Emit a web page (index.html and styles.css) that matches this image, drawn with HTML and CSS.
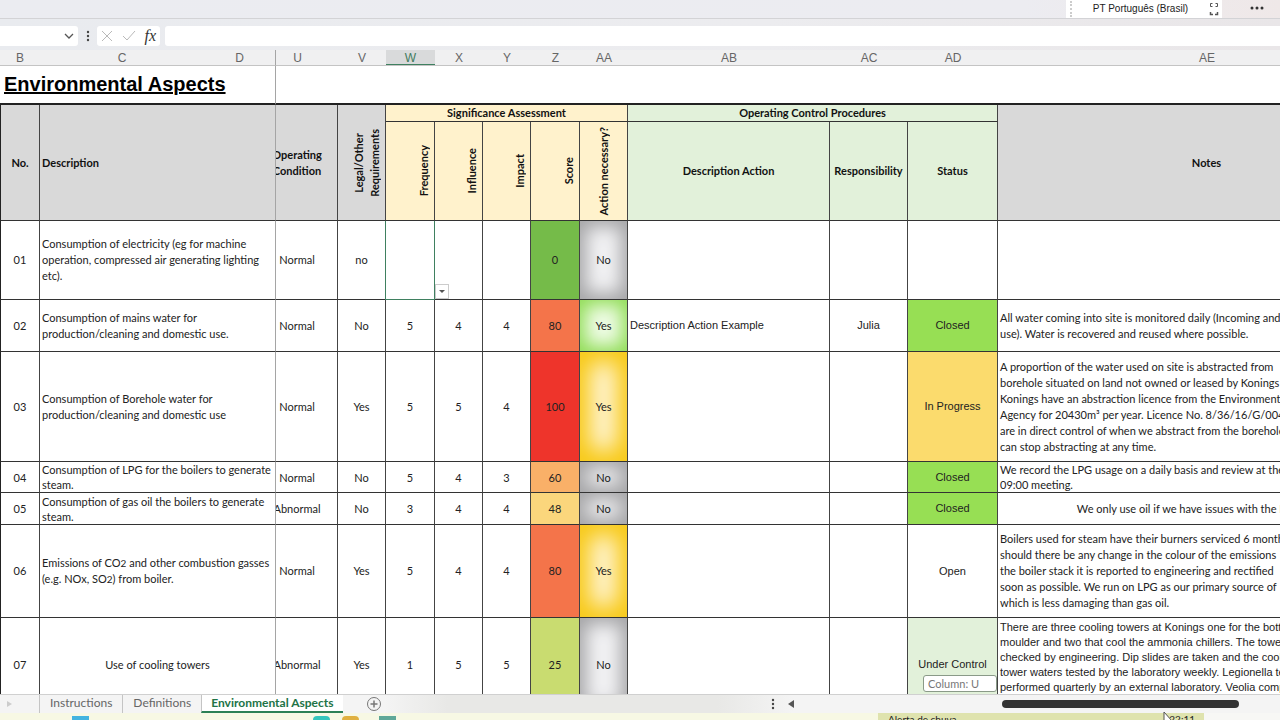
FILE: index.html
```
<!DOCTYPE html>
<html lang="en">
<head>
    <meta charset="UTF-8">
    <meta name="viewport" content="width=device-width, initial-scale=1.0">
    <title>Environmental Aspects</title>
    <link rel="stylesheet" href="styles.css">
</head>
<body>
    <header class="ribbon">
        <div class="language-bar">
            <span class="grip"></span>
            <span class="language">PT Português (Brasil)</span>
            <svg class="bar-icon" viewBox="0 0 10 18" width="10" height="18" fill="none" stroke="#555">
                <path d="M3.500 3.500H1.500V6.500H3.500M6.500 3.500H8.500V6.500H6.500"/>
                <path d="M1.500 12V14.500H4M8.500 12V14.500H6" stroke-width="1.500"/>
            </svg>
        </div>
        <button class="more" aria-label="More options">
            <svg viewBox="0 0 14 4" width="14" height="4" fill="#333"><circle cx="2" cy="2" r="1.500"/><circle cx="7" cy="2" r="1.500"/><circle cx="12" cy="2" r="1.500"/></svg>
        </button>
    </header>

    <div class="formula-bar">
        <div class="name-box">
            <input type="text" aria-label="Name box">
            <button aria-label="Open name list">
                <svg viewBox="0 0 10 6" width="10" height="6" fill="none" stroke="#555" stroke-width="1.300"><path d="M1 1l4 4 4-4"/></svg>
            </button>
        </div>
        <svg class="dots" viewBox="0 0 4 12" width="4" height="12" fill="#444"><circle cx="2" cy="2" r="1.200"/><circle cx="2" cy="6" r="1.200"/><circle cx="2" cy="10" r="1.200"/></svg>
        <div class="actions">
            <button aria-label="Cancel">
                <svg viewBox="0 0 12 12" width="12" height="12" fill="none" stroke="#b9b9b9"><path d="M1 1l10 10M11 1L1 11"/></svg>
            </button>
            <button aria-label="Enter">
                <svg viewBox="0 0 14 12" width="14" height="12" fill="none" stroke="#b9b9b9"><path d="M1 6l4 4L13 1"/></svg>
            </button>
            <button class="fx" aria-label="Insert function">fx</button>
        </div>
        <input class="formula" type="text" aria-label="Formula">
    </div>

    <main class="grid">
        <table>
            <colgroup>
                <col class="c-b"><col class="c-c"><col class="c-d"><col class="c-u"><col class="c-v">
                <col class="c-w"><col class="c-x"><col class="c-y"><col class="c-z"><col class="c-aa">
                <col class="c-ab"><col class="c-ac"><col class="c-ad"><col class="c-ae">
            </colgroup>
            <thead>
                <tr class="letters">
                    <th>B</th><th>C</th><th class="freeze">D</th><th class="under"><span>U</span></th><th>V</th>
                    <th class="selected">W</th><th>X</th><th>Y</th><th>Z</th><th>AA</th>
                    <th>AB</th><th>AC</th><th>AD</th><th>AE</th>
                </tr>
                <tr class="title-row">
                    <td colspan="3" class="freeze"><h1>Environmental Aspects</h1></td>
                    <td colspan="11"></td>
                </tr>
                <tr class="group-row">
                    <th rowspan="2" class="gray edge">No.</th>
                    <th rowspan="2" colspan="2" class="gray left freeze">Description</th>
                    <th rowspan="2" class="gray under"><span>Operating<br>Condition</span></th>
                    <th rowspan="2" class="gray upright"><span>Legal/Other<br>Requirements</span></th>
                    <th colspan="5" class="cream">Significance Assessment</th>
                    <th colspan="3" class="mint">Operating Control Procedures</th>
                    <th rowspan="2" class="gray">Notes</th>
                </tr>
                <tr class="head-row">
                    <th class="cream upright"><span>Frequency</span></th>
                    <th class="cream upright"><span>Influence</span></th>
                    <th class="cream upright"><span>Impact</span></th>
                    <th class="cream upright"><span>Score</span></th>
                    <th class="cream upright center"><span>Action necessary?</span></th>
                    <th class="mint">Description Action</th>
                    <th class="mint">Responsibility</th>
                    <th class="mint">Status</th>
                </tr>
            </thead>
            <tbody>
                <tr class="row-01">
                    <td class="edge">01</td>
                    <td colspan="2" class="left freeze">Consumption of electricity (eg for machine<br>operation, compressed air generating lighting<br>etc).</td>
                    <td class="under"><span>Normal</span></td>
                    <td>no</td>
                    <td class="active-cell"><button class="cell-drop" aria-label="Pick a value"></button></td>
                    <td></td>
                    <td></td>
                    <td class="score-0">0</td>
                    <td class="glow-gray">No</td>
                    <td></td>
                    <td></td>
                    <td></td>
                    <td></td>
                </tr>
                <tr class="row-02">
                    <td class="edge">02</td>
                    <td colspan="2" class="left freeze">Consumption of mains water for<br>production/cleaning and domestic use.</td>
                    <td class="under"><span>Normal</span></td>
                    <td>No</td>
                    <td>5</td>
                    <td>4</td>
                    <td>4</td>
                    <td class="score-80">80</td>
                    <td class="glow-green">Yes</td>
                    <td class="arial left">Description Action Example</td>
                    <td class="arial">Julia</td>
                    <td class="arial closed">Closed</td>
                    <td class="left">All water coming into site is monitored daily (Incoming and<br>use). Water is recovered and reused where possible.</td>
                </tr>
                <tr class="row-03">
                    <td class="edge">03</td>
                    <td colspan="2" class="left freeze">Consumption of Borehole water for<br>production/cleaning and domestic use</td>
                    <td class="under"><span>Normal</span></td>
                    <td>Yes</td>
                    <td>5</td>
                    <td>5</td>
                    <td>4</td>
                    <td class="score-100">100</td>
                    <td class="glow-gold">Yes</td>
                    <td></td>
                    <td></td>
                    <td class="arial progress">In Progress</td>
                    <td class="left">A proportion of the water used on site is abstracted from<br>borehole situated on land not owned or leased by Konings<br>Konings have an abstraction licence from the Environment<br>Agency for 20430m³ per year. Licence No. 8/36/16/G/004<br>are in direct control of when we abstract from the borehole<br>can stop abstracting at any time.</td>
                </tr>
                <tr class="row-04">
                    <td class="edge">04</td>
                    <td colspan="2" class="left freeze">Consumption of LPG for the boilers to generate<br>steam.</td>
                    <td class="under"><span>Normal</span></td>
                    <td>No</td>
                    <td>5</td>
                    <td>4</td>
                    <td>3</td>
                    <td class="score-60">60</td>
                    <td class="glow-gray">No</td>
                    <td></td>
                    <td></td>
                    <td class="arial closed">Closed</td>
                    <td class="left">We record the LPG usage on a daily basis and review at the<br>09:00 meeting.</td>
                </tr>
                <tr class="row-05">
                    <td class="edge">05</td>
                    <td colspan="2" class="left freeze">Consumption of gas oil the boilers to generate<br>steam.</td>
                    <td class="under"><span>Abnormal</span></td>
                    <td>No</td>
                    <td>3</td>
                    <td>4</td>
                    <td>4</td>
                    <td class="score-48">48</td>
                    <td class="glow-gray">No</td>
                    <td></td>
                    <td></td>
                    <td class="arial closed">Closed</td>
                    <td>We only use oil if we have issues with the LPG supply.</td>
                </tr>
                <tr class="row-06">
                    <td class="edge">06</td>
                    <td colspan="2" class="left freeze">Emissions of CO<small>2</small> and other combustion gasses<br>(e.g. NOx, SO<small>2</small>) from boiler.</td>
                    <td class="under"><span>Normal</span></td>
                    <td>Yes</td>
                    <td>5</td>
                    <td>4</td>
                    <td>4</td>
                    <td class="score-80">80</td>
                    <td class="glow-gold">Yes</td>
                    <td></td>
                    <td></td>
                    <td class="arial">Open</td>
                    <td class="left">Boilers used for steam have their burners serviced 6 monthly<br>should there be any change in the colour of the emissions<br>the boiler stack it is reported to engineering and rectified<br>soon as possible. We run on LPG as our primary source of<br>which is less damaging than gas oil.</td>
                </tr>
                <tr class="row-07">
                    <td class="edge">07</td>
                    <td colspan="2" class="freeze">Use of cooling towers</td>
                    <td class="under"><span>Abnormal</span></td>
                    <td>Yes</td>
                    <td>1</td>
                    <td>5</td>
                    <td>5</td>
                    <td class="score-25">25</td>
                    <td class="glow-gray">No</td>
                    <td></td>
                    <td></td>
                    <td class="arial mint">Under Control</td>
                    <td class="arial left top">There are three cooling towers at Konings one for the bottle<br>moulder and two that cool the ammonia chillers. The towers<br>checked by engineering. Dip slides are taken and the cooling<br>tower waters tested by the laboratory weekly. Legionella tests<br>performed quarterly by an external laboratory. Veolia complete</td>
                </tr>
            </tbody>
        </table>
        <div class="scroll-tip">Column: U</div>
    </main>

    <footer class="sheet-bar">
        <span class="nav-arrow"></span>
        <nav class="tabs">
            <a href="#instructions">Instructions</a>
            <a href="#definitions">Definitions</a>
            <a href="#aspects" class="current">Environmental Aspects</a>
        </nav>
        <button class="add" aria-label="New sheet">
            <svg viewBox="0 0 16 16" width="16" height="16" fill="none" stroke="#777"><circle cx="8" cy="8" r="6.500"/><path d="M4.500 8h7M8 4.500v7" stroke-width="1.500"/></svg>
        </button>
        <div class="scroller">
            <svg viewBox="0 0 4 12" width="4" height="12" fill="#444"><circle cx="2" cy="2" r="1.200"/><circle cx="2" cy="6" r="1.200"/><circle cx="2" cy="10" r="1.200"/></svg>
            <button aria-label="Scroll left"><svg viewBox="0 0 6 8" width="6" height="8" fill="#555"><path d="M6 0v8L0 4z"/></svg></button>
            <div class="track"><div class="thumb"></div></div>
        </div>
    </footer>

    <div class="taskbar">
        <div class="task-left"><span class="app"></span><span class="app teal"></span><span class="app amber"></span><span class="app green"></span></div>
        <div class="task-right"><span>Alerta de chuva</span><span>22:11</span></div>
    </div>
    <svg class="pointer" viewBox="0 0 10 14" width="10" height="14" fill="#fff" stroke="#555"><path d="M1 1v12l3-3h5z"/></svg>
</body>
</html>
```
FILE: styles.css
```
* {
    box-sizing: border-box;
    margin: 0;
    padding: 0;
}

body {
    display: flex;
    flex-direction: column;
    height: 100vh;
    overflow: hidden;
    font-family: Lato, "Liberation Sans", sans-serif;
    font-size: 11px;
    line-height: 16px;
    color: #222;
    background: #fff;
}

button {
    display: flex;
    align-items: center;
    justify-content: center;
    border: none;
    background: none;
}

input {
    border: none;
    outline: none;
    background: none;
}

/* top strip */
.ribbon {
    display: flex;
    justify-content: flex-end;
    height: 19px;
    background: linear-gradient(90deg, #ebecf1, #ececf1 80%, #efe8e8);
    border-bottom: 1px solid #d3d3d6;
}

.language-bar {
    display: flex;
    align-items: center;
    width: 156px;
    margin-right: 28px;
    background: #fff;
    font-family: "Liberation Sans", sans-serif;
    font-size: 10px;
}

.grip {
    height: 16px;
    margin-left: 4px;
    border-left: 2px dotted #ccc;
}

.language {
    flex: 1;
    text-align: center;
}

.bar-icon {
    margin-right: 3px;
}

.more {
    width: 14px;
    height: 16px;
    margin-right: 16px;
}

/* formula bar */
.formula-bar {
    display: flex;
    align-items: center;
    gap: 8px;
    height: 31px;
    padding: 2px 0 0;
    background: linear-gradient(90deg, #e9ebef, #ececef 60%, #e9e6e8);
}

.name-box {
    display: flex;
    align-items: center;
    width: 78px;
    height: 20px;
    background: #fff;
    border-radius: 0 3px 3px 0;
}

.name-box input {
    flex: 1;
    min-width: 0;
}

.name-box button {
    width: 18px;
    height: 20px;
}

.dots {
    margin-right: -1px;
}

.actions {
    display: flex;
    align-items: center;
    justify-content: space-between;
    width: 63px;
    height: 20px;
    padding: 0 4px;
    background: #fff;
    border-radius: 3px;
}

.fx {
    font-family: "Liberation Serif", serif;
    font-size: 16px;
    font-style: italic;
    color: #333;
}

.formula {
    flex: 1;
    height: 20px;
    margin-left: -3px;
    background: #fff;
    border-radius: 3px 0 0 3px;
}

/* sheet */
.grid {
    position: relative;
    flex: 1;
    min-height: 0;
    overflow: hidden;
}

table {
    width: 1416px;
    table-layout: fixed;
    border-collapse: separate;
    border-spacing: 0;
}

.c-b { width: 40px; }
.c-c { width: 164px; }
.c-d { width: 72px; }
.c-u { width: 62px; }
.c-v { width: 48px; }
.c-w { width: 49px; }
.c-x { width: 48px; }
.c-y { width: 48px; }
.c-z { width: 49px; }
.c-aa { width: 48px; }
.c-ab { width: 202px; }
.c-ac { width: 78px; }
.c-ad { width: 90px; }
.c-ae { width: 418px; }

th,
td {
    border-right: 1px solid #444;
    border-bottom: 1px solid #333;
    text-align: center;
    vertical-align: middle;
    white-space: nowrap;
}

th {
    font-weight: 700;
    color: #111;
}

.edge {
    border-left: 1px solid #222;
}

.left {
    padding-left: 2px;
    text-align: left;
}

.top {
    padding-top: 2px;
    vertical-align: top;
}

tr > .freeze {
    border-right-color: #a5a5a5;
}

/* column partly hidden by the frozen pane */
.under {
    overflow: hidden;
}

.under span {
    display: block;
    margin-left: -19px;
}

.letters th {
    height: 16px;
    padding-top: 2px;
    border: none;
    border-bottom: 1px solid #c4c4c4;
    background: #f0f0f1;
    font: 12px/13px "Liberation Sans", sans-serif;
    color: #666;
}

.letters .freeze {
    border-right: 1px solid #a5a5a5;
}

.letters .selected {
    background: #d9dadb;
    box-shadow: inset 0 -1px #3f8060;
    color: #3f7a5d;
}

.title-row td {
    height: 39px;
    border: none;
    border-bottom: 2px solid #222;
    text-align: left;
}

.title-row .freeze {
    border-right: 1px solid #a5a5a5;
}

h1 {
    padding: 0 0 2px 4px;
    font: 700 20px/24px "Liberation Sans", sans-serif;
    color: #000;
    text-decoration: underline;
}

.group-row { height: 17px; }
.head-row { height: 99px; }
.row-01 { height: 79px; }
.row-02 { height: 52px; }
.row-03 { height: 110px; }
.row-04 { height: 31px; }
.row-05 { height: 32px; }
.row-06 { height: 93px; }
.row-07 { height: 94px; }

.row-04 td,
.row-05 td {
    line-height: 15px;
}

.gray { background: #d9d9d9; }
.cream { background: #fff2cc; }
.mint { background: #e2f1da; }

.upright {
    padding-right: 2px;
    text-align: right;
}

.upright.center {
    padding-right: 0;
    text-align: center;
}

.upright span {
    display: inline-block;
    writing-mode: vertical-rl;
    transform: rotate(180deg);
    text-align: center;
    vertical-align: middle;
}

.arial {
    font-family: "Liberation Sans", sans-serif;
    line-height: 15px;
}

.score-0 { background: #75bb49; }
.score-25 { background: #c9dc70; }
.score-48 { background: #fbd67c; }
.score-60 { background: #f9b068; }
.score-80 { background: #f4744a; }
.score-100 { background: #ee342b; }

.closed { background: #97df54; }
.progress { background: #fbdb6d; }

.glow-gray {
    background: #f2f2f4;
    box-shadow: inset 0 0 18px 6px #a4a4a6;
}

.glow-green {
    background: #effce6;
    box-shadow: inset 0 0 18px 5px #8fdc54;
}

.glow-gold {
    background: #fff8e4;
    box-shadow: inset 0 0 22px 11px #f8c916;
}

.active-cell {
    position: relative;
    z-index: 1;
    border-color: #3f8060;
    box-shadow: -1px 0 #3f8060;
}

.cell-drop {
    position: absolute;
    left: 49px;
    bottom: 0;
    width: 14px;
    height: 15px;
    border: 1px solid #ccc;
    background: #fff;
}

.cell-drop::after {
    content: "";
    border: 3px solid transparent;
    border-top-color: #555;
    border-bottom: none;
}

small {
    font-size: 10px;
}

.scroll-tip {
    position: absolute;
    right: 283px;
    bottom: 2px;
    width: 74px;
    height: 17px;
    padding-left: 4px;
    border: 1px solid #8a9a88;
    border-radius: 3px;
    background: #fff;
    line-height: 15px;
    color: #777;
}

/* sheet tabs */
.sheet-bar {
    display: flex;
    height: 19px;
    background: linear-gradient(90deg, #f4f4f4 30%, #e8e8e6 35%, #e8e8e6 56%, #f4f4f4 62%);
    border-top: 1px solid #d0d0d0;
}

.nav-arrow {
    align-self: center;
    margin: 0 27px 0 7px;
    border: 3px solid transparent;
    border-left: 5px solid #ccc;
    border-right: none;
}

.tabs {
    display: flex;
    font-size: 12px;
}

.tabs a {
    padding: 0 10px;
    border-left: 1px solid #c4c4c4;
    color: #666;
    text-decoration: none;
}

.tabs .current {
    padding: 0 9px;
    border-bottom: 2px solid #2c8055;
    background: #fff;
    font-weight: 700;
    color: #217346;
}

.add {
    width: 16px;
    height: 18px;
    margin-left: 23px;
}

.scroller {
    display: flex;
    align-items: center;
    gap: 13px;
    width: 509px;
    margin-left: auto;
}

.track {
    flex: 1;
    padding: 0 41px 0 195px;
}

.thumb {
    height: 8px;
    border-radius: 4px;
    background: #333;
}

/* visible edge of the taskbar */
.taskbar {
    display: flex;
    height: 7px;
    overflow: hidden;
    background: #f7f8e4;
    font-size: 10px;
    line-height: 12px;
}

.task-left {
    display: flex;
    flex: 1;
    gap: 224px;
    padding: 3px 0 0 72px;
}

.app {
    flex: none;
    width: 17px;
    background: #43b3e0;
}

.app.teal {
    border-radius: 8px 8px 0 0;
    background: #36c5bd;
}

.app.amber {
    margin-left: -212px;
    border-radius: 8px 8px 0 0;
    background: #e0b040;
}

.app.green {
    margin-left: -204px;
    background: #5fa898;
}

.task-right {
    display: flex;
    justify-content: space-between;
    width: 402px;
    padding: 0 85px 0 10px;
    background: linear-gradient(90deg, #dfe3ae 81%, #f7f7f5 81%);
}

.pointer {
    position: absolute;
    right: 107px;
    bottom: -5px;
}
```
